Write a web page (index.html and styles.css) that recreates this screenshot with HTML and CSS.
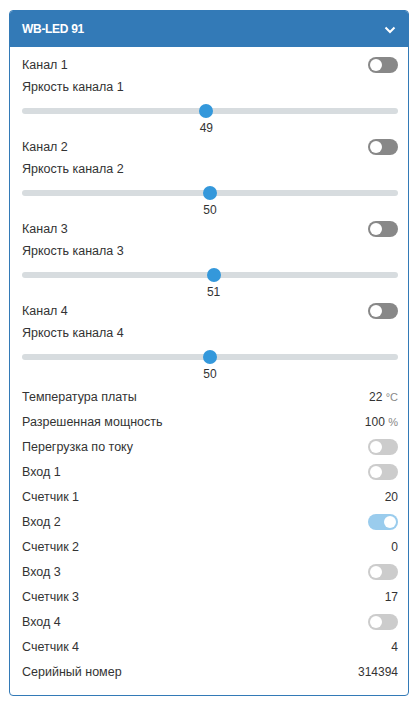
FILE: index.html
```html
<!DOCTYPE html>
<html>
<head>
<meta charset="utf-8">
<link rel="stylesheet" href="styles.css">
</head>
<body>
<div class="wrap">
  <div class="panel">
    <div class="panel-heading">
      <span class="title">WB-LED 91</span>
      <svg class="chev" width="12" height="8" viewBox="0 0 12 8"><path d="M1.5 1.5 L6 6 L10.5 1.5" fill="none" stroke="#fff" stroke-width="2"/></svg>
    </div>
    <div class="panel-body">
      <div class="channel">
        <div class="row"><span>Канал 1</span><span class="toggle dark"></span></div>
        <div class="row"><span>Яркость канала 1</span></div>
        <div class="slider"><input type="range" min="0" max="100" value="49"></div>
        <div class="sval"><span class="num" style="margin-left: calc(7px + (100% - 14px) * 0.49)">49</span></div>
      </div>
      <div class="channel">
        <div class="row"><span>Канал 2</span><span class="toggle dark"></span></div>
        <div class="row"><span>Яркость канала 2</span></div>
        <div class="slider"><input type="range" min="0" max="100" value="50"></div>
        <div class="sval"><span class="num" style="margin-left: calc(7px + (100% - 14px) * 0.50)">50</span></div>
      </div>
      <div class="channel">
        <div class="row"><span>Канал 3</span><span class="toggle dark"></span></div>
        <div class="row"><span>Яркость канала 3</span></div>
        <div class="slider"><input type="range" min="0" max="100" value="51"></div>
        <div class="sval"><span class="num" style="margin-left: calc(7px + (100% - 14px) * 0.51)">51</span></div>
      </div>
      <div class="channel">
        <div class="row"><span>Канал 4</span><span class="toggle dark"></span></div>
        <div class="row"><span>Яркость канала 4</span></div>
        <div class="slider"><input type="range" min="0" max="100" value="50"></div>
        <div class="sval"><span class="num" style="margin-left: calc(7px + (100% - 14px) * 0.50)">50</span></div>
      </div>
      <div class="info">
        <div class="irow"><span>Температура платы</span><span class="val">22 <span class="unit">°C</span></span></div>
        <div class="irow"><span>Разрешенная мощность</span><span class="val">100 <span class="unit">%</span></span></div>
        <div class="irow"><span>Перегрузка по току</span><span class="toggle light"></span></div>
        <div class="irow"><span>Вход 1</span><span class="toggle light"></span></div>
        <div class="irow"><span>Счетчик 1</span><span class="val">20</span></div>
        <div class="irow"><span>Вход 2</span><span class="toggle on"></span></div>
        <div class="irow"><span>Счетчик 2</span><span class="val">0</span></div>
        <div class="irow"><span>Вход 3</span><span class="toggle light"></span></div>
        <div class="irow"><span>Счетчик 3</span><span class="val">17</span></div>
        <div class="irow"><span>Вход 4</span><span class="toggle light"></span></div>
        <div class="irow"><span>Счетчик 4</span><span class="val">4</span></div>
        <div class="irow"><span>Серийный номер</span><span class="val">314394</span></div>
      </div>
    </div>
  </div>
</div>
</body>
</html>
```
FILE: styles.css
```css
* { box-sizing: border-box; }
html, body { margin: 0; padding: 0; background: #fff; }
body {
  font-family: "Liberation Sans", Arial, sans-serif;
  font-size: 12.5px;
  color: #333;
}
.wrap { padding: 10px 8px 8px 9px; }
.panel {
  border: 1px solid #337ab7;
  border-radius: 4px;
  overflow: hidden;
}
.panel-heading {
  background: #337ab7;
  color: #fff;
  height: 36px;
  display: flex;
  align-items: center;
  justify-content: space-between;
  padding: 0 12px 0 12px;
}
.title { font-weight: bold; font-size: 12px; letter-spacing: -0.3px; }
.chev { display: block; margin-top: 1px; }
.panel-body { padding: 7px 10px 11px 12px; }
.row {
  height: 22px;
  display: flex;
  align-items: center;
  justify-content: space-between;
}
.slider { height: 22px; padding-top: 10px; }
.slider input {
  -webkit-appearance: none;
  appearance: none;
  display: block;
  width: 100%;
  height: 6px;
  margin: 0;
  background: #d7dcdf;
  border-radius: 3px;
  outline: none;
}
.slider input::-webkit-slider-thumb {
  -webkit-appearance: none;
  appearance: none;
  width: 14px;
  height: 14px;
  border-radius: 50%;
  background: #3498db;
  border: none;
}
.sval { height: 16px; line-height: 16px; font-size: 12px; }
.num { display: inline-block; transform: translateX(-50%); }
.info { margin-top: 2px; }
.irow {
  height: 25px;
  display: flex;
  align-items: center;
  justify-content: space-between;
}
.val { font-size: 12px; }
.unit { font-size: 11px; color: #888; }
.toggle {
  position: relative;
  width: 30px;
  height: 16px;
  border-radius: 8px;
  display: inline-block;
}
.toggle::after {
  content: "";
  position: absolute;
  top: 2px;
  left: 2px;
  width: 12px;
  height: 12px;
  border-radius: 50%;
  background: #fff;
}
.toggle.dark { background: #888; }
.toggle.light { background: #ccc; }
.toggle.on { background: #9acced; }
.toggle.on::after { left: 16px; }
```
